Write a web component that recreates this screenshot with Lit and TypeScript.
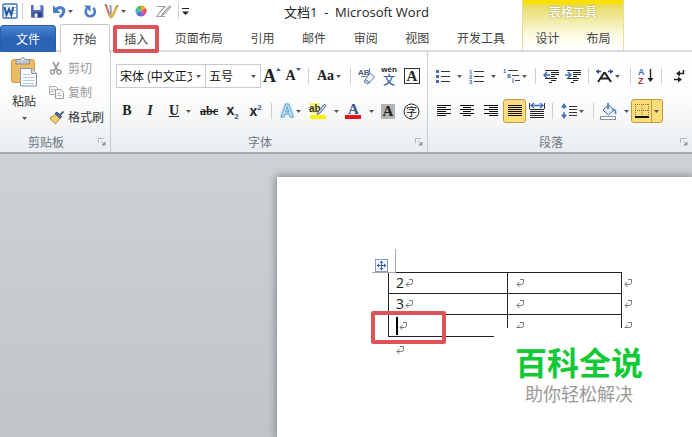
import { LitElement, html, css, svg, nothing, TemplateResult } from "lit";
import { customElement } from "lit/decorators.js";
import { classMap } from "lit/directives/class-map.js";

const caret = html`<svg class="caret" width="5" height="3" viewBox="0 0 5 3" aria-hidden="true"><path d="M0 0h5L2.5 3z" fill="#555" /></svg>`;

const icon = (w: number, h: number, body: unknown) =>
  html`<svg width=${w} height=${h} viewBox="0 0 ${w} ${h}" fill="none" aria-hidden="true">${body}</svg>`;

const bars = (rows: number[][], dy = 2) =>
  rows.map(([x1, x2], i) => svg`<path d="M${x1} ${i * dy + 0.5}H${x2}" stroke="#111" />`);

const alignIcon = (inset: (odd: boolean) => number[]) =>
  icon(14, 12, bars([0, 1, 2, 3, 4, 5].map((i) => inset(i % 2 === 1))));

const icons: Record<string, TemplateResult> = {
  word: icon(16, 16, svg`
    <rect x="1" y="1" width="14" height="14" rx="1" fill="#fff" stroke="#3d74b8" stroke-width="1.4" />
    <rect x="2" y="3" width="9" height="10" fill="#e3edf9" />
    <path d="M11 4.500h3M11 7.500h3M11 10.500h3" stroke="#9db8dc" />
    <path d="M2.500 4 4.500 12 7 6l2.300 6 2-8" stroke="#2458a6" stroke-width="1.9" />`),
  save: icon(14, 14, svg`
    <path d="M1 1h11l1.500 1.500V13.500H1z" fill="#5668b8" />
    <rect x="3.500" y="1" width="7" height="5" fill="#eef3fc" />
    <rect x="3" y="8.500" width="8.500" height="5" fill="#2c3f86" />
    <rect x="4.500" y="9.500" width="3" height="4" fill="#e8edf8" />`),
  undo: icon(14, 14, svg`
    <path d="M4 5.500C7.500 1.500 13 4 11.500 8.500 11 10.500 9.500 12 7.500 13" stroke="#4a7cc9" stroke-width="3" />
    <path d="M1 1v8h7.500z" fill="#4a7cc9" />`),
  redo: icon(14, 14, svg`
    <path d="M4 4.500A4.600 4.600 0 1 0 10 4" stroke="#4a7cc9" stroke-width="2.600" />
    <path d="M1 1.500h6.500v6.500z" fill="#4a7cc9" />`),
  pens: icon(15, 16, svg`
    <path d="M2 2l4 12" stroke="#cf6a55" stroke-width="2" />
    <path d="M6.500 2l.5 11" stroke="#8fa3b8" stroke-width="2" />
    <path d="M13 3 8 14" stroke="#e8a33d" stroke-width="2.400" />
    <path d="M4 11h6l-2 4.500H6z" fill="#d9b15e" />
    <path d="M1 3l1-2M13 4l1-2" stroke="#555" />`),
  wheel: icon(12, 12, svg`
    <path d="M6 6V.5A5.500 5.500 0 0 1 10.800 3.300z" fill="#f2a33a" />
    <path d="M6 6 10.800 3.300a5.500 5.500 0 0 1 0 5.400z" fill="#e8484a" />
    <path d="M6 6l4.800 2.700A5.500 5.500 0 0 1 6 11.500z" fill="#b455c8" />
    <path d="M6 6v5.500A5.500 5.500 0 0 1 1.200 8.700z" fill="#4a6ee0" />
    <path d="M6 6 1.200 8.700a5.500 5.500 0 0 1 0-5.400z" fill="#37b6c9" />
    <path d="M6 6 1.200 3.300A5.500 5.500 0 0 1 6 .5z" fill="#62bf4c" />`),
  draw: icon(15, 13, svg`
    <path d="M1 1.500h8L4 7 1 11.500h8" stroke="#a0a0a0" stroke-width="1.200" />
    <path d="M13.500 1 7 8l-1.500 2.500L8.500 9 15 2z" fill="#d8d8d8" stroke="#8c8c8c" />`),
  more: icon(7, 9, svg`<path d="M0 1.500h7" stroke="#222" /><path d="M0 4.500h7L3.500 8z" fill="#222" />`),
  paste: icon(28, 31, svg`
    <rect x="1.500" y="3.500" width="23" height="23" rx="2" fill="#edbd64" stroke="#d19d48" />
    <path d="M6 3.500h4a3 3 0 0 1 5.500 0h4V8H6z" fill="#c3c8cf" stroke="#858c96" />
    <circle cx="12.700" cy="3.500" r="1" fill="#fff" />
    <path d="M10.500 12.500h11l5 5V30h-16z" fill="#fafcff" stroke="#7f92b5" />
    <path d="M21.500 12.500v5h5" fill="#d3def0" stroke="#7f92b5" />
    <path d="M13 18.500h7M13 21.500h11M13 24.500h11M13 27.500h11" stroke="#b7c6e0" />`),
  cut: icon(14, 14, svg`
    <path d="M4 1l5 9M10 1 5 10" stroke="#9a9a9a" stroke-width="1.600" />
    <circle cx="3.500" cy="11" r="2" stroke="#9a9a9a" stroke-width="1.400" />
    <circle cx="10" cy="11" r="2" stroke="#9a9a9a" stroke-width="1.400" />`),
  copy: icon(15, 14, svg`
    <path d="M.5 1.500h6l2 2v6h-8z" fill="#f4f4f4" stroke="#adadad" />
    <path d="M6.500 4.500h5l3 3v6h-8z" fill="#f8f8f8" stroke="#9c9c9c" />
    <path d="M2 4.500h4M2 6.500h3M8.500 8.500h3M8.500 10.500h4" stroke="#b8b8b8" />`),
  brush: icon(16, 14, svg`
    <path d="M1 8 7 4l4 4-4 5.500C5 13 2 10.500 1 8z" fill="#f0cf6e" stroke="#b58d33" />
    <path d="M6 3.500 8 2l4.500 4.500L11 8.500z" fill="#4a6aa8" stroke="#344e83" />
    <path d="M10.500 4 14 .8l1.200 1.400L12 5.500z" fill="#5b6472" />`),
  launcher: icon(8, 8, svg`
    <path d="M.5 5V.5H6" stroke="#b0b6be" /><path d="M3.500 3.500l3 3M7 4v3H4z" stroke="#8f969f" fill="#8f969f" />`),
  eraser: icon(18, 18, svg`
    <text x="0" y="8" font-size="8" font-weight="700" font-family="Liberation Sans" fill="#4a5876">AB</text>
    <path d="M11.500 1v7M3 9.500h6" stroke="#6a86bb" />
    <path d="M7 12.500 12 6.500l4.500 3L12 15.500z" fill="#eef2fa" stroke="#7083a8" />
    <path d="M7 12.500 12 15.500l-2.500 1.500L6 15z" fill="#c3cee4" stroke="#7083a8" />`),
  circled: icon(17, 17, svg`
    <circle cx="8.500" cy="8.500" r="7.500" stroke="#222" />
    <text x="8.500" y="12.500" text-anchor="middle" font-size="11" font-family="Noto Sans CJK SC" fill="#111">字</text>`),
  highlight: icon(18, 18, svg`
    <rect x="1" y="1" width="9" height="10" fill="#f6f26a" />
    <text x="0" y="10" font-size="10" font-weight="700" font-family="Liberation Sans" fill="#333">ab</text>
    <path d="M15.500 2 9 10l-1 2.500L11 11 17 4z" fill="#c8d2e6" stroke="#566a94" />
    <rect x="1" y="13" width="16" height="4" fill="#fff200" />`),
  fontColor: icon(17, 18, svg`
    <text x="8.500" y="12" text-anchor="middle" font-size="15" font-weight="700" font-family="Liberation Serif" fill="#3b5592">A</text>
    <rect x="0" y="13" width="16" height="4" fill="#e8121c" />`),
  bullets: icon(14, 14, svg`
    ${[2, 7, 12].map((y) => svg`<rect x="0" y=${y - 1} width="3" height="3" fill="#4869ac" /><path d="M5 ${y + 0.5}h9" stroke="#333" />`)}`),
  numbers: icon(15, 15, svg`
    ${[0, 1, 2].map((i) => svg`
      <text x="0" y=${i * 5 + 5} font-size="6" font-weight="700" font-family="Liberation Sans" fill="#4869ac">${i + 1}</text>
      <path d="M5 ${i * 5 + 2.5}h10" stroke="#333" />`)}`),
  multi: icon(17, 16, svg`
    <text x="0" y="5" font-size="6" font-weight="700" font-family="Liberation Sans" fill="#4869ac">1</text>
    <text x="4" y="10" font-size="7" font-weight="700" font-family="Liberation Sans" fill="#4869ac">a</text>
    <text x="9" y="15" font-size="7" font-weight="700" font-family="Liberation Sans" fill="#4869ac">i</text>
    <path d="M5 2.500h10M9 7.500h7M12 12.500h5" stroke="#444" />`),
  outdent: icon(16, 14, svg`
    <path d="M2 1.500h14M8 3.500h8M8 5.500h8M8 7.500h4M2 9.500h12M8 11.500h5M6 13.500h3" stroke="#222" />
    <path d="M1 6h6M4 3 1 6l3 3" stroke="#3f6cbc" stroke-width="1.500" />`),
  indent: icon(16, 14, svg`
    <path d="M2 1.500h14M8 3.500h8M8 5.500h8M8 7.500h4M2 9.500h12M8 11.500h5M6 13.500h3" stroke="#222" />
    <path d="M0 6h6M3 3l3 3-3 3" stroke="#3f6cbc" stroke-width="1.500" />`),
  asian: icon(17, 14, svg`
    <path d="M2 13 8 4h1l6 9M5 9.500h7" stroke="#222" stroke-width="2" />
    <path d="M0 2.500h5M17 2.500h-5" stroke="#3a4a86" stroke-width="1.500" />
    <path d="M3 0v5L0 2.500zM14 0v5l3-2.500z" fill="#3a4a86" />`),
  sort: icon(16, 18, svg`
    <text x="0" y="8" font-size="9" font-weight="700" font-family="Liberation Sans" fill="#3f6cbc">A</text>
    <text x="0" y="17" font-size="9" font-weight="700" font-family="Liberation Sans" fill="#a8382f">Z</text>
    <path d="M12.500 2v12" stroke="#222" stroke-width="1.400" /><path d="M9.500 11h6l-3 4z" fill="#222" />`),
  marks: icon(12, 14, svg`
    <path d="M10.500 1v3.500H5M1 10.500h6" stroke="#222" stroke-width="1.500" />
    <path d="M7 1.500v6l-4-3zM5 7.500v6l4-3z" fill="#222" />`),
  left: alignIcon((odd) => (odd ? [0, 9] : [0, 14])),
  center: alignIcon((odd) => (odd ? [3, 11] : [0, 14])),
  right: alignIcon((odd) => (odd ? [5, 14] : [0, 14])),
  justify: alignIcon(() => [0, 14]),
  distribute: icon(16, 16, svg`
    <path d="M.5 0v6M15.500 0v6" stroke="#333" />
    <path d="M2 2.500h12M5 0 2 2.500 5 5M11 0l3 2.500L11 5" stroke="#3f6cbc" stroke-width="1.300" />
    <path d="M1 6.500h14M1 8.500h14M1 10.500h14M1 12.500h14M1 14.500h14" stroke="#222" />`),
  spacing: icon(16, 16, svg`
    <path d="M3 2v12" stroke="#3f6cbc" stroke-dasharray="4 3" stroke-width="1.400" />
    <path d="M0 4.500 3 0l3 4.500zM0 11.500 3 16l3-4.500z" fill="#3f6cbc" />
    <path d="M8 3.500h8M8 6.500h8M8 9.500h8M8 12.500h8" stroke="#333" />`),
  bucket: icon(17, 17, svg`
    <path d="M3 7 8.500 2l5.500 5-5.500 5z" fill="#dfe9f7" stroke="#4a6a9e" />
    <path d="M8 0v6M12 6c3 0 4 2 3.500 5" stroke="#4a7fc4" stroke-width="1.700" />
    <rect x=".5" y="13.500" width="15" height="3" fill="#fff" stroke="#8a93a0" />`),
  borders: icon(14, 14, svg`
    <path d="M.5 0v13M7 0v13M13.500 0v13M0 .5h14M0 6.500h14" stroke="#8a7434" stroke-dasharray="1 1" />
    <path d="M0 13h14" stroke="#111" stroke-width="2" />`),
  move: icon(13, 13, svg`
    <rect x=".5" y=".5" width="12" height="12" fill="#f6f9ff" stroke="#8d9bb8" />
    <path d="M6.500 3v7M3 6.500h7" stroke="#3f62ac" />
    <path d="M4.500 4h4l-2-2.500zM4.500 9h4l-2 2.500zM4 4.500v4L1.500 6.500zM9 4.500v4l2.500-2z" fill="#3f62ac" />`),
  grow: icon(5, 3, svg`<path d="M0 3h5L2.500 0z" fill="#3c5a9a" />`),
  shrink: icon(5, 3, svg`<path d="M0 0h5L2.500 3z" fill="#3c5a9a" />`),
  ret: icon(8, 8, svg`
    <path d="M4 .5h3.500v3Q7.500 5.500 5.500 5.500H1M3.500 3 1 5.500 3.500 8" stroke="#777" />`),
};

interface Tool {
  name: string;
  face?: unknown;
  drop?: boolean;
  on?: boolean;
  split?: boolean;
}
const SEP = null;
type Row = (Tool | null)[];

const t = (name: string, face: unknown, extra: Partial<Tool> = {}): Tool => ({ name, face, ...extra });
const glyph = (cls: string, body: unknown) => html`<span class="glyph ${cls}">${body}</span>`;

const quickRow: Row = [
  t("Word", icons.word), SEP, t("保存", icons.save), t("撤销", icons.undo, { drop: true }),
  t("恢复", icons.redo), t("画笔", icons.pens, { drop: true }), t("颜色", icons.wheel),
  t("绘图", icons.draw), SEP, t("自定义快速访问工具栏", icons.more),
];

const fontRow1: Row = [
  t("增大字体", glyph("sized big", html`A${icons.grow}`)),
  t("缩小字体", glyph("sized", html`A${icons.shrink}`)),
  SEP, t("更改大小写", glyph("case", "Aa"), { drop: true }), SEP,
  t("清除格式", icons.eraser),
  t("拼音指南", html`<span class="pinyin"><i>wén</i><b>文</b></span>`),
  t("字符边框", glyph("boxed", "A")),
];

const fontRow2: Row = [
  t("加粗", glyph("", "B")),
  t("倾斜", glyph("italic", "I")),
  t("下划线", glyph("under", "U"), { drop: true, split: true }),
  t("删除线", glyph("strike", "abc")),
  t("下标", glyph("script", html`x<sub>2</sub>`)),
  t("上标", glyph("script", html`x<sup>2</sup>`)),
  SEP,
  t("文本效果", glyph("effect", "A"), { drop: true }),
  t("突出显示", icons.highlight, { drop: true, split: true }),
  t("字体颜色", icons.fontColor, { drop: true, split: true }),
  t("字符底纹", glyph("shaded", "A")),
  t("带圈字符", icons.circled),
];

const paraRow1: Row = [
  t("项目符号", icons.bullets, { drop: true, split: true }),
  t("编号", icons.numbers, { drop: true, split: true }),
  t("多级列表", icons.multi, { drop: true }),
  SEP, t("减少缩进量", icons.outdent), t("增加缩进量", icons.indent), SEP,
  t("中文版式", icons.asian, { drop: true }), SEP, t("排序", icons.sort), SEP, t("显示编辑标记", icons.marks),
];

const paraRow2: Row = [
  t("左对齐", icons.left), t("居中", icons.center), t("右对齐", icons.right),
  t("两端对齐", icons.justify, { on: true }), t("分散对齐", icons.distribute), SEP,
  t("行距", icons.spacing, { drop: true }), SEP,
  t("底纹", icons.bucket, { drop: true, split: true }),
  t("框线", icons.borders, { drop: true, split: true, on: true }),
];

const tools = (row: Row) => row.map((tool) => tool === SEP
  ? html`<span class="sep"></span>`
  : html`<button class=${classMap({ tool: true, on: !!tool.on, split: !!tool.split })} aria-label=${tool.name}>
      ${tool.face}${tool.drop ? caret : nothing}
    </button>`);

@customElement("app-root")
export class AppRoot extends LitElement {
  static styles = css`
    :host {
      display: flex;
      flex-direction: column;
      min-height: 100vh;
      overflow: hidden;
      background: #fff;
      color: #333;
      font: 12px/16px "Noto Sans CJK SC", sans-serif;
    }
    * { box-sizing: border-box; }
    svg { display: block; flex: none; }
    button {
      font: inherit;
      color: inherit;
      background: none;
      border: 0;
      padding: 0;
      white-space: nowrap;
    }
    .top { display: flex; height: 52px; border-bottom: 2px solid #dadbdc; }
    .main { width: 522px; flex: none; display: flex; flex-direction: column; }
    .titlebar { display: flex; height: 24px; align-items: center; }
    .quick {
      display: grid;
      height: 22px;
      width: 284px;
      align-self: flex-start;
      padding-left: 2px;
      grid-template-columns: 16px 9px 19px 33px 21px 30px 22px 23px 6px 9px;
    }
    .title {
      margin: 0;
      font: 13px/24px "Open Sans", "Noto Sans CJK SC", sans-serif;
      color: #222;
      white-space: pre;
    }
    .tabs { display: flex; height: 28px; justify-content: space-between; padding-right: 5px; }
    .tab { padding: 0 12px; height: 27px; color: #444; }
    .tab.file {
      width: 56px;
      margin-top: 1px;
      color: #fff;
      border-radius: 3px 3px 0 0;
      background: linear-gradient(#4a86d2, #2b62b3 50%, #2c65b8);
      border: 1px solid #2a5ca6;
    }
    .tab.active {
      background: #fff;
      border: 1px solid #c4c7cb;
      border-bottom: 0;
      border-radius: 3px 3px 0 0;
      height: 29px;
      z-index: 1;
    }
    .tab.marked { padding: 0 7px; border: 4px solid #de5357; height: 28px; margin-top: 1px; border-radius: 2px; z-index: 1; }
    .context {
      width: 102px;
      flex: none;
      border: solid #e6dd9a;
      border-width: 0 1px;
      background: linear-gradient(#f8e008 0 4px, #e9dc62 5px, #efe89a 18px, #fbf9e0 34px, #fff 48px);
      text-align: center;
    }
    .context h2 { margin: 0; font: 500 12px/24px "Noto Sans CJK SC", sans-serif; color: #fff; text-shadow: 0 0 2px #98903c; }
    .context div { display: flex; justify-content: center; gap: 3px; }

    .ribbon {
      display: grid;
      grid-template-columns: 111px 317px 1fr;
      height: 102px;
      background: linear-gradient(#fff, #fbfcfc 50%, #e9edf0);
      border-bottom: 2px solid #a7abb0;
    }
    .group { display: grid; grid-template-rows: 80px 20px; border-right: 1px solid #c9ced4; min-width: 0; }
    .group:last-child { border-right: 0; }
    .group footer {
      display: grid;
      grid-template-columns: 1fr auto;
      align-items: center;
      padding: 0 4px 0 0;
      color: #6d7682;
      text-align: center;
    }
    .group footer h3 { margin: 0; font-size: 12px; line-height: 16px; font-weight: 400; padding-right: 6px; }
    .clipboard { display: grid; grid-template-columns: 38px 1fr; column-gap: 6px; padding: 4px 0 0 5px; }
    .paste { display: flex; flex-direction: column; align-items: center; }
    .paste span { margin: 6px 0 8px; }
    .clips { display: grid; grid-template-rows: 24px 24px 25px; }
    .clips button { display: grid; grid-template-columns: 16px auto; justify-content: start; gap: 3px; align-items: center; }
    .clips button[disabled] { color: #999; }
    .lines { display: grid; grid-template-rows: 24px 24px; row-gap: 11px; padding: 12px 0 0 5px; }
    .line { display: grid; align-items: stretch; }
    .f1 { grid-template-columns: 90px 55px 22px 20px 11px 30px 12px 21px 24px 22px; }
    .f2 { grid-template-columns: 22px 24px 36px 22px 25px 21px 10px 29px 37px 34px 24px 22px; }
    .p1 { grid-template-columns: 32px 35px 30px 10px 22px 22px 8px 32px 12px 19px 12px 24px; }
    .p2 { grid-template-columns: 22px 24px 24px 23px 22px 9px 31px 10px 33px 32px; }
    .combo { position: relative; display: block; border: 1px solid #c8ccd2; background: #fff; }
    .combo + .combo { border-left: 0; }
    .combo select {
      appearance: none;
      border: 0;
      background: none;
      font: inherit;
      color: #111;
      width: 100%;
      height: 100%;
      padding: 0 13px 0 3px;
    }
    .combo .caret { position: absolute; right: 4px; top: 10px; }
    .tool { display: flex; align-items: center; justify-content: center; gap: 2px; min-width: 0; }
    .tool.split { gap: 7px; }
    .tool.on { background: linear-gradient(#fbdc84, #ffdf7a); border: 1px solid #c49b3c; border-radius: 3px; }
    .tool.on.split { gap: 5px; background: linear-gradient(90deg, #fddc7c 19px, #c49b3c 19px 20px, #fddc7c 20px); }
    .sep { width: 1px; height: 16px; background: #ccd0d5; justify-self: center; align-self: center; }
    .glyph { font: 700 14px/16px "Liberation Serif", serif; color: #222; }
    .glyph sup, .glyph sub { font-size: 8px; line-height: 8px; color: #3c5a9a; }
    .sized { display: flex; align-items: flex-start; }
    .big { font-size: 18px; }
    .italic { font-style: italic; }
    .under { text-decoration: underline; }
    .strike { font-size: 12px; text-decoration: line-through; }
    .script { font-family: "Liberation Sans", sans-serif; }
    .effect {
      font: 700 18px/20px "Liberation Sans", sans-serif;
      color: #e8f5fd;
      -webkit-text-stroke: 1px #5ba6d3;
      text-shadow: 0 0 3px #8cc6ea;
    }
    .boxed { border: 1px solid #333; width: 16px; height: 16px; line-height: 14px; font-size: 15px; background: #fff; }
    .shaded { background: #b4b4b4; width: 14px; height: 15px; line-height: 15px; font-size: 15px; }
    .pinyin { display: grid; justify-items: center; color: #222; }
    .pinyin i { font: 700 8px/8px "Liberation Sans", sans-serif; }
    .pinyin b { font-size: 12px; line-height: 12px; font-weight: 500; color: #3f5fa8; }

    .desk {
      flex: 1;
      display: flex;
      padding: 23px 0 0 277px;
      background: linear-gradient(#ced2d7, #c1c5ca);
    }
    .page {
      flex: 1;
      position: relative;
      background: #fff;
      box-shadow: 0 0 8px 1px #7d8186;
      padding: 95px 0 0 111px;
    }
    .grid { border-collapse: collapse; table-layout: fixed; width: 246px; }
    .grid td { height: 21px; padding: 0 0 0 7px; border: 1px solid #222; }
    .grid tr:last-child td { height: 22px; }
    .grid td:nth-child(1) { width: 119px; }
    .grid td:nth-child(2) { width: 114px; padding-left: 8px; }
    .grid td.end { width: 13px; border: 0; padding-left: 2px; }
    .cell { display: flex; align-items: center; gap: 1px; font: 14px/20px "Open Sans", sans-serif; color: #222; height: 20px; }
    .cursor { width: 2px; height: 18px; background: #000; }
    .after { padding: 9px 0 0 8px; }
    .handle { position: absolute; left: 98px; top: 82px; }
    .corner {
      position: absolute;
      left: 95px;
      top: 72px;
      width: 24px;
      height: 24px;
      border: solid #a8a8a8;
      border-width: 0 1px 1px 0;
    }
    .ring { position: absolute; left: 94px; top: 134px; width: 75px; height: 33px; border: 4px solid #de5357; border-radius: 2px; }
    .mark {
      position: absolute;
      left: 217px;
      top: 151px;
      width: 170px;
      height: 90px;
      background: #fff;
      text-align: center;
      padding: 10px 0 0;
    }
    .mark strong { display: block; font-size: 32px; line-height: 46px; font-weight: 700; color: #12c936; }
    .mark span { display: block; font-size: 18px; line-height: 18px; color: #999; }
  `;

  private tab(label: string, kind = "") {
    return html`<button class="tab ${kind}" role="tab" aria-selected=${kind === "active"}>${label}</button>`;
  }

  private footer(label: string) {
    return html`<footer><h3>${label}</h3><button aria-label="${label}选项">${icons.launcher}</button></footer>`;
  }

  render() {
    return html`
      <header class="top">
        <div class="main">
          <div class="titlebar">
            <div class="quick">${tools(quickRow)}</div>
            <h1 class="title">文档1  -  Microsoft Word</h1>
          </div>
          <nav class="tabs" role="tablist">
            ${this.tab("文件", "file")}${this.tab("开始", "active")}${this.tab("插入", "marked")}
            ${["页面布局", "引用", "邮件", "审阅", "视图", "开发工具"].map((l) => this.tab(l))}
          </nav>
        </div>
        <section class="context">
          <h2>表格工具</h2>
          <div>${this.tab("设计")}${this.tab("布局")}</div>
        </section>
      </header>

      <section class="ribbon">
        <div class="group">
          <div class="clipboard">
            <button class="paste">${icons.paste}<span>粘贴</span>${caret}</button>
            <div class="clips">
              <button disabled>${icons.cut}剪切</button>
              <button disabled>${icons.copy}复制</button>
              <button>${icons.brush}格式刷</button>
            </div>
          </div>
          ${this.footer("剪贴板")}
        </div>
        <div class="group">
          <div class="lines">
            <div class="line f1">
              <label class="combo"><select aria-label="字体"><option>宋体 (中文正文)</option></select>${caret}</label>
              <label class="combo"><select aria-label="字号"><option>五号</option></select>${caret}</label>
              ${tools(fontRow1)}
            </div>
            <div class="line f2">${tools(fontRow2)}</div>
          </div>
          ${this.footer("字体")}
        </div>
        <div class="group">
          <div class="lines">
            <div class="line p1">${tools(paraRow1)}</div>
            <div class="line p2">${tools(paraRow2)}</div>
          </div>
          ${this.footer("段落")}
        </div>
      </section>

      <main class="desk">
        <article class="page">
          <span class="corner"></span>
          <span class="handle">${icons.move}</span>
          <table class="grid">
            <tbody>
              ${["2", "3", ""].map((value) => html`<tr>
                <td><div class="cell">${value || html`<span class="cursor"></span>`}${icons.ret}</div></td>
                <td><div class="cell">${icons.ret}</div></td>
                <td class="end"><div class="cell">${icons.ret}</div></td>
              </tr>`)}
            </tbody>
          </table>
          <div class="after">${icons.ret}</div>
          <span class="ring"></span>
          <aside class="mark"><strong>百科全说</strong><span>助你轻松解决</span></aside>
        </article>
      </main>
    `;
  }
}
